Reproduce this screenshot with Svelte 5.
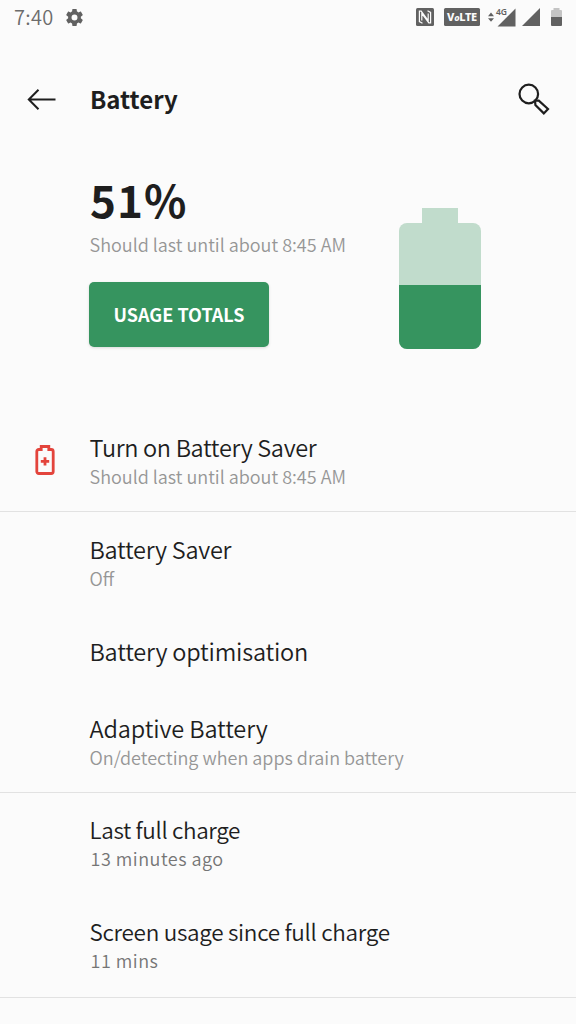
<script>
	const level = 51;
	const estimate = 'Should last until about 8:45 AM';

	const sections = [
		[{ title: 'Turn on Battery Saver', summary: estimate, icon: true, tracking: -0.34 }],
		[
			{ title: 'Battery Saver', summary: 'Off', tracking: -0.26 },
			{ title: 'Battery optimisation', tracking: -0.2 },
			{
				title: 'Adaptive Battery',
				summary: 'On/detecting when apps drain battery',
				tracking: -0.12
			}
		],
		[
			{ title: 'Last full charge', summary: '13 minutes ago', info: true, tracking: -0.37 },
			{ title: 'Screen usage since full charge', summary: '11 mins', info: true, tracking: -0.3 }
		]
	];
</script>

<div class="screen">
	<div class="status">
		<span class="clock">7:40</span>
		<svg class="gear" viewBox="2 2 20 20">
			<path
				fill-rule="evenodd"
				d="M19.43 12.98c.04-.32.07-.64.07-.98s-.03-.66-.07-.98l2.11-1.65c.19-.15.24-.42.12-.64l-2-3.46c-.12-.22-.39-.3-.61-.22l-2.49 1c-.52-.4-1.08-.73-1.69-.98l-.38-2.65C14.46 2.18 14.25 2 14 2h-4c-.25 0-.46.18-.49.42l-.38 2.65c-.61.25-1.17.59-1.69.98l-2.49-1c-.23-.09-.49 0-.61.22l-2 3.46c-.13.22-.07.49.12.64l2.11 1.65c-.04.32-.07.65-.07.98s.03.66.07.98l-2.11 1.65c-.19.15-.24.42-.12.64l2 3.46c.12.22.39.3.61.22l2.49-1c.52.4 1.08.73 1.69.98l.38 2.65c.03.24.24.42.49.42h4c.25 0 .46-.18.49-.42l.38-2.65c.61-.25 1.17-.59 1.69-.98l2.49 1c.23.09.49 0 .61-.22l2-3.46c.12-.22.07-.49-.12-.64l-2.11-1.65zM12 15.5a3.500 3.500 0 1 1 0-7 3.500 3.500 0 0 1 0 7z"
			/>
		</svg>
		<div class="indicators">
			<svg class="nfc" width="18" height="18" viewBox="0 0 18 18">
				<rect width="18" height="18" rx="1.5" />
				<path d="M6.500 15.200 3.400 13.600V3.200h1.800l7 9.400V5.400M11.500 2.800l3.100 1.600v10.400h-1.800l-7-9.400v7.200" />
			</svg>
			<span class="volte">V<i>o</i>LTE</span>
			<svg class="mobile" width="28" height="19" viewBox="0 0 28 19">
				<path d="M0 8.200 3 4.600l3 3.600zM0 10.200l3 3.600 3-3.600zM27.500 .5v18H9.500z" />
				<text class="halo" x="8" y="7.300">4G</text>
				<text x="8" y="7.300">4G</text>
			</svg>
			<svg class="signal" width="18" height="18" viewBox="0 0 18 18">
				<path d="M18 0v18H0z" />
			</svg>
			<svg class="cell" width="11" height="18" viewBox="0 0 11 18">
				<path class="empty" d="M2.500 0h6v2H10a1 1 0 0 1 1 1v6H0V3a1 1 0 0 1 1-1h1.500z" />
				<path d="M0 9h11v8a1 1 0 0 1-1 1H1a1 1 0 0 1-1-1z" />
			</svg>
		</div>
	</div>

	<header>
		<svg class="back" width="30" height="22" viewBox="0 0 30 22">
			<path d="M28.500 11.500H2M11.500 1.700 1.800 11.500l9.700 9.800" />
		</svg>
		<h1>Battery</h1>
		<svg class="search" width="34" height="34" viewBox="0 0 34 34">
			<circle cx="11.800" cy="12" r="9.300" />
			<path d="M18 18.600h3.800l9.200 8.400-4.200 4.400-8.400-8.400z" />
		</svg>
	</header>

	<section class="summary">
		<div class="info">
			<div class="level">{level}%</div>
			<div class="estimate">{estimate}</div>
			<button>USAGE TOTALS</button>
		</div>
		<div class="battery">
			<div class="cap"></div>
			<div class="body">
				<div class="fill" style="height: {level}%"></div>
			</div>
		</div>
	</section>

	{#each sections as rows}
		<section class="group">
			{#each rows as row}
				<div class="row" class:single={!row.summary} class:info={row.info}>
					<div class="lead">
						{#if row.icon}
							<svg width="20" height="30" viewBox="0 0 20 30">
								<path
									class="case"
									d="M6.200 1.500h7.600v3h2.400a2 2 0 0 1 2 2v20a2 2 0 0 1-2 2H3.800a2 2 0 0 1-2-2v-20a2 2 0 0 1 2-2h2.400z"
								/>
								<path class="plus" d="M10 12.200v8.400M5.800 16.400h8.400" />
							</svg>
						{/if}
					</div>
					<div class="text">
						<div class="title" style="letter-spacing: {row.tracking}px">{row.title}</div>
						{#if row.summary}
							<div class="sub">{row.summary}</div>
						{/if}
					</div>
				</div>
			{/each}
		</section>
	{/each}
</div>

<style>
	:global(body) {
		margin: 0;
		background: #fbfbfb;
	}

	.screen {
		width: 576px;
		height: 1024px;
		overflow: hidden;
		background: #fbfbfb;
		color: #1e1e1e;
		font-family: 'Noto Sans CJK SC', 'Noto Sans', sans-serif;
		font-weight: 350;
	}

	.status {
		display: flex;
		align-items: center;
		height: 34px;
		padding: 0 14px;
		color: #6c6c6c;
		fill: #616161;
	}

	.clock {
		width: 52px;
		font-size: 20px;
		line-height: 34px;
		letter-spacing: 0.3px;
	}

	.gear {
		width: 17px;
		height: 17px;
	}

	.indicators {
		display: flex;
		align-items: center;
		margin-left: auto;
	}

	.nfc path {
		fill: none;
		stroke: #fbfbfb;
		stroke-width: 1.2;
	}

	.volte {
		width: 36px;
		height: 18px;
		margin-left: 10px;
		border-radius: 1.5px;
		background: #616161;
		color: #fbfbfb;
		font-family: 'Noto Sans', sans-serif;
		font-size: 11px;
		font-weight: 800;
		line-height: 18px;
		text-align: center;
		letter-spacing: -0.3px;
	}

	.volte i {
		font-size: 9px;
	}

	.mobile {
		margin-left: 8px;
		overflow: visible;
	}

	.mobile text {
		font-family: 'Noto Sans', sans-serif;
		font-size: 8.5px;
		font-weight: 600;
	}

	.mobile .halo {
		stroke: #fbfbfb;
		stroke-width: 2;
	}

	.signal {
		margin-left: 6px;
	}

	.cell {
		margin-left: 11px;
	}

	.empty {
		fill: #c4c4c4;
	}

	header {
		display: flex;
		align-items: center;
		height: 130px;
		padding: 0 25px 0 27px;
		fill: none;
		stroke: #1e1e1e;
		stroke-width: 2;
	}

	h1 {
		margin: 0 0 0 33px;
		font-size: 24px;
		font-weight: 700;
		line-height: 36px;
	}

	.search {
		margin-left: auto;
		stroke-width: 2.2;
	}

	.summary {
		display: flex;
		justify-content: space-between;
		height: 246px;
		padding: 0 95px 0 89px;
		box-sizing: border-box;
	}

	.level {
		margin-top: 5px;
		padding-left: 1px;
		font-size: 44px;
		font-weight: 700;
		line-height: 60px;
		letter-spacing: 1px;
	}

	.estimate {
		margin-top: 2px;
		padding-left: 0.5px;
		line-height: 26px;
	}

	.estimate,
	.sub {
		color: #969696;
		font-size: 18px;
	}

	button {
		display: block;
		width: 180px;
		height: 65px;
		margin-top: 25px;
		padding: 0 0 2px;
		border: 0;
		border-radius: 5px;
		background: #36945f;
		box-shadow: 0 1px 3px #0002;
		color: #fff;
		font: 700 18px 'Noto Sans CJK SC', 'Noto Sans', sans-serif;
	}

	.battery {
		display: flex;
		flex-direction: column;
		align-items: center;
		margin-top: 44px;
	}

	.cap {
		width: 36px;
		height: 15px;
		background: #c1dccc;
	}

	.body {
		display: flex;
		align-items: flex-end;
		width: 82px;
		height: 126px;
		border-radius: 8px;
		background: #c1dccc;
		overflow: hidden;
	}

	.fill {
		width: 100%;
		background: #36945f;
	}

	.group {
		border-bottom: 1px solid #e2e2e2;
	}

	.row {
		display: flex;
		padding: 23px 0;
	}

	.row:last-child {
		padding-bottom: 22px;
	}

	.row.single {
		padding-bottom: 24px;
	}

	.row.info {
		padding: 22px 0 24px;
	}

	.lead {
		display: flex;
		align-items: center;
		width: 55px;
		padding-left: 34.5px;
	}

	.lead svg {
		margin-top: -3px;
	}

	.title {
		margin-bottom: 2px;
		font-size: 23.5px;
		line-height: 28px;
	}

	.case,
	.plus {
		fill: none;
		stroke: #e3443c;
		stroke-width: 2.8;
	}

	.sub {
		line-height: 26px;
	}

	.info .title {
		font-size: 22.5px;
	}

	.info .sub {
		padding-left: 1px;
		color: #757575;
		letter-spacing: 0.5px;
	}
</style>
